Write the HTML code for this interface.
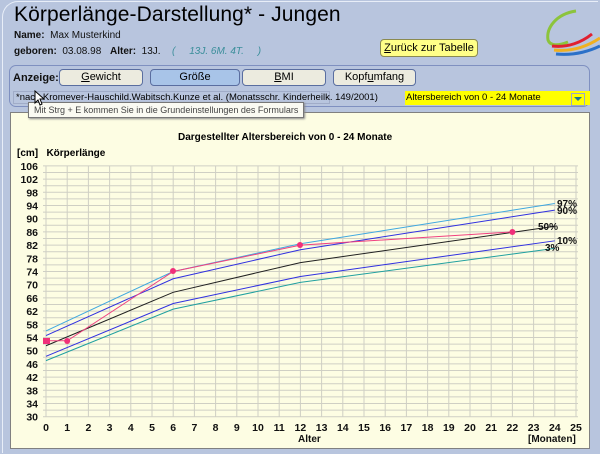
<!DOCTYPE html>
<html style="width:600px;height:454px;overflow:hidden"><head><meta charset="utf-8"><style>
*{margin:0;padding:0;box-sizing:border-box}
body{width:600px;height:454px;overflow:hidden;background:#b8c5de;font-family:"Liberation Sans",sans-serif;position:relative}
.abs{position:absolute;white-space:nowrap}
.win{position:absolute;left:2px;top:1px;width:596px;height:452px;border:1px solid #e8eef8;border-right:none;border-bottom:none;border-radius:16px 0 0 0}
.title{left:14px;top:3px;font-size:21px;color:#000;letter-spacing:0.1px}
.sm{font-size:10px;color:#111}
.b{font-weight:bold}
.btn{position:absolute;top:69px;height:17px;border:1px solid #5a6ea0;border-radius:4px;background:#ecebdf;font-size:11px;text-align:center;line-height:15px}
.group{position:absolute;left:9px;top:65px;width:581px;height:42px;border:1px solid #7f90c0;border-radius:7px}
</style></head><body>
<div class="win"></div>
<div class="abs title">Körperlänge-Darstellung* - Jungen</div>
<div class="abs sm" style="left:14px;top:30px"><span class="b">Name:</span>&nbsp; Max Musterkind</div>
<div class="abs sm" style="left:14px;top:46px"><span class="b">geboren:</span>&nbsp; 03.08.98</div>
<div class="abs sm" style="left:110px;top:46px"><span class="b">Alter:</span>&nbsp; 13J.</div>
<div class="abs sm" style="left:172px;top:46px;color:#3a8e9a;font-style:italic">(&nbsp;&nbsp;&nbsp;&nbsp; 13J. 6M. 4T.&nbsp;&nbsp;&nbsp;&nbsp; )</div>
<div class="abs" style="left:380px;top:39px;width:98px;height:18px;background:#ffff88;border:1px solid #8a8a50;border-radius:4px;font-size:11px;text-align:center;line-height:16px"><u>Z</u>urück zur Tabelle</div>
<svg class="abs" style="left:538px;top:8px" width="62" height="48" viewBox="0 0 62 48">
<path d="M38 3 C18 6 8 20 10 32 C12 38 20 38 30 34" fill="none" stroke="#8cc43c" stroke-width="3"/>
<path d="M14 38 C30 40 44 34 54 26" fill="none" stroke="#e02030" stroke-width="3"/>
<path d="M16 42 C34 44 50 38 62 30" fill="none" stroke="#f0b020" stroke-width="3"/>
<path d="M18 46 C38 48 54 42 62 38" fill="none" stroke="#2a70c8" stroke-width="3"/>
</svg>
<div class="group"></div>
<div class="abs sm b" style="left:13px;top:72px;font-size:11px">Anzeige:</div>
<div class="btn" style="left:59px;width:84px"><u>G</u>ewicht</div>
<div class="btn" style="left:150px;width:90px;background:#a8c4e8">Größe</div>
<div class="btn" style="left:242px;width:84px"><u>B</u>MI</div>
<div class="btn" style="left:333px;width:83px">Kopf<u>u</u>mfang</div>
<div class="abs" style="left:13px;top:91px;width:317px;height:13px;border:1px solid #a0acc8;font-size:9.5px;line-height:11px;padding-left:2px">*nach Kromever-Hauschild.Wabitsch.Kunze et al. (Monatsschr. Kinderheilk. 149/2001)</div>
<div class="abs" style="left:405px;top:91px;width:185px;height:14px;background:#ffff00;font-size:9.5px;line-height:14px;padding-left:1px">Altersbereich von 0 - 24 Monate</div>
<div class="abs" style="left:571px;top:93px;width:14px;height:13px;border:1px solid #9aa8c8;"></div>
<div class="abs" style="left:574px;top:97px;width:0;height:0;border-left:4px solid transparent;border-right:4px solid transparent;border-top:4px solid #1a7890"></div>
<div class="abs" style="left:10px;top:112px;width:580px;height:337px;background:#fdfde3;border:1px solid #808080"></div>
<div class="abs" style="left:28px;top:102px;height:16px;background:#fafaf2;border:1px solid #777;font-size:9px;color:#444;line-height:14px;padding:0 5px;box-shadow:1px 1px 2px #888">Mit Strg + E kommen Sie in die Grundeinstellungen des Formulars</div>
<svg class="abs" style="left:34px;top:90px" width="10" height="16" viewBox="0 0 10 16"><path d="M1 1 L1 13 L4 10 L6 15 L8 14 L6 9 L10 9 Z" fill="#fff" stroke="#000" stroke-width="1"/></svg>
<div class="abs b" style="left:178px;top:132px;font-size:10px">Dargestellter Altersbereich von 0 - 24 Monate</div>
<div class="abs b" style="left:17px;top:148px;font-size:10px">[cm]&nbsp;&nbsp; Körperlänge</div>
<svg class="abs" style="left:0;top:0" width="600" height="454">
<g id="grid" stroke="#cfcfc4" stroke-width="1"></g>
<g font-family="Liberation Sans" font-size="10.5" font-weight="bold" fill="#111" id="lbl"></g>
<g transform="translate(46,515.7) scale(21.2,-3.3)" fill="none" stroke-width="1">
<polyline vector-effect="non-scaling-stroke" stroke="#40a8e0" points="0,56 6,74 12,82.4 24,94.6"/>
<polyline vector-effect="non-scaling-stroke" stroke="#3030e0" points="0,54.6 6,71.8 12,80.6 24,92.6"/>
<polyline vector-effect="non-scaling-stroke" stroke="#202020" points="0,51.5 6,67.7 12,76.7 24,87.7"/>
<polyline vector-effect="non-scaling-stroke" stroke="#3030e0" points="0,48.3 6,64.3 12,72.5 24,83.3"/>
<polyline vector-effect="non-scaling-stroke" stroke="#20a0a0" points="0,47 6,62.6 12,70.7 24,81"/>
<polyline vector-effect="non-scaling-stroke" stroke="#f04080" points="0,53 1,53 6,74 12,82 22,86"/>
</g>
<g fill="#f0307a"><rect x="43" y="338" width="7" height="6"/><circle cx="67.2" cy="341" r="3"/><circle cx="173" cy="271" r="3"/><circle cx="300" cy="245" r="3"/><circle cx="512.4" cy="232" r="3"/></g>
<g font-family="Liberation Sans" font-size="10" font-weight="bold" fill="#111">
<text x="557" y="207">97%</text><text x="557" y="214">90%</text><text x="538" y="230">50%</text><text x="557" y="244">10%</text><text x="545" y="251">3%</text>
<text x="298" y="442">Alter</text><text x="528" y="442">[Monaten]</text>
</g>
</svg>
<script>
var g=document.getElementById('grid'),l=document.getElementById('lbl'),ns='http://www.w3.org/2000/svg';
function Y(v){return 416.7-(v-30)*3.3}
for(var v=30;v<=106;v+=2){var ln=document.createElementNS(ns,'line');ln.setAttribute('x1',43);ln.setAttribute('x2',578);ln.setAttribute('y1',Y(v));ln.setAttribute('y2',Y(v));g.appendChild(ln);
if((v-30)%4==0){var t=document.createElementNS(ns,'text');t.setAttribute('x',38);t.setAttribute('y',Y(v)+4);t.setAttribute('text-anchor','end');t.textContent=v;l.appendChild(t);}}
for(var m=0;m<=25;m++){var x=46+m*21.2;var ln=document.createElementNS(ns,'line');ln.setAttribute('x1',x);ln.setAttribute('x2',x);ln.setAttribute('y1',Y(106));ln.setAttribute('y2',Y(30));g.appendChild(ln);
var t=document.createElementNS(ns,'text');t.setAttribute('x',x);t.setAttribute('y',431);t.setAttribute('text-anchor','middle');t.textContent=m;l.appendChild(t);}
</script>
</body></html>
